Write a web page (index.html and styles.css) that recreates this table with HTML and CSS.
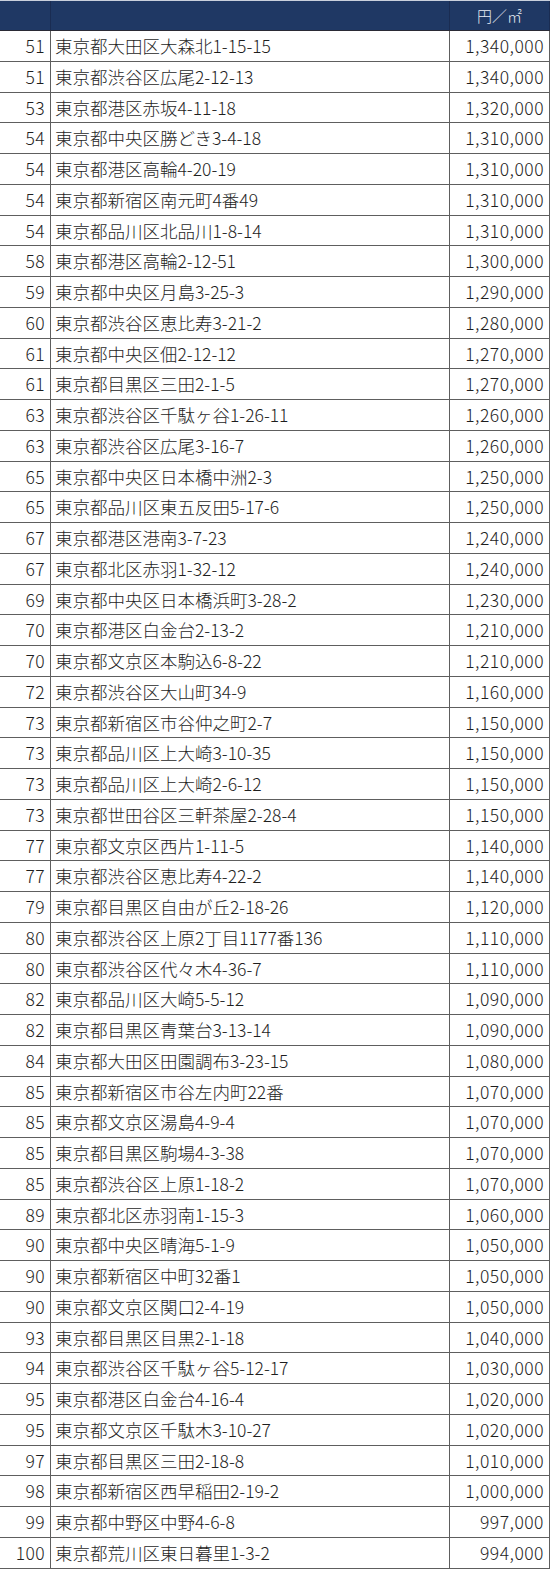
FILE: index.html
```html
<!DOCTYPE html>
<html lang="ja">
<head>
<meta charset="utf-8">
<link rel="stylesheet" href="styles.css">
</head>
<body>
<div class="tbl">
  <div class="row head"><div class="c rank"></div><div class="c addr"></div><div class="c price">円／㎡</div></div>
  <div class="row"><div class="c rank">51</div><div class="c addr">東京都大田区大森北1-15-15</div><div class="c price">1,340,000</div></div>
  <div class="row"><div class="c rank">51</div><div class="c addr">東京都渋谷区広尾2-12-13</div><div class="c price">1,340,000</div></div>
  <div class="row"><div class="c rank">53</div><div class="c addr">東京都港区赤坂4-11-18</div><div class="c price">1,320,000</div></div>
  <div class="row"><div class="c rank">54</div><div class="c addr">東京都中央区勝どき3-4-18</div><div class="c price">1,310,000</div></div>
  <div class="row"><div class="c rank">54</div><div class="c addr">東京都港区高輪4-20-19</div><div class="c price">1,310,000</div></div>
  <div class="row"><div class="c rank">54</div><div class="c addr">東京都新宿区南元町4番49</div><div class="c price">1,310,000</div></div>
  <div class="row"><div class="c rank">54</div><div class="c addr">東京都品川区北品川1-8-14</div><div class="c price">1,310,000</div></div>
  <div class="row"><div class="c rank">58</div><div class="c addr">東京都港区高輪2-12-51</div><div class="c price">1,300,000</div></div>
  <div class="row"><div class="c rank">59</div><div class="c addr">東京都中央区月島3-25-3</div><div class="c price">1,290,000</div></div>
  <div class="row"><div class="c rank">60</div><div class="c addr">東京都渋谷区恵比寿3-21-2</div><div class="c price">1,280,000</div></div>
  <div class="row"><div class="c rank">61</div><div class="c addr">東京都中央区佃2-12-12</div><div class="c price">1,270,000</div></div>
  <div class="row"><div class="c rank">61</div><div class="c addr">東京都目黒区三田2-1-5</div><div class="c price">1,270,000</div></div>
  <div class="row"><div class="c rank">63</div><div class="c addr">東京都渋谷区千駄ヶ谷1-26-11</div><div class="c price">1,260,000</div></div>
  <div class="row"><div class="c rank">63</div><div class="c addr">東京都渋谷区広尾3-16-7</div><div class="c price">1,260,000</div></div>
  <div class="row"><div class="c rank">65</div><div class="c addr">東京都中央区日本橋中洲2-3</div><div class="c price">1,250,000</div></div>
  <div class="row"><div class="c rank">65</div><div class="c addr">東京都品川区東五反田5-17-6</div><div class="c price">1,250,000</div></div>
  <div class="row"><div class="c rank">67</div><div class="c addr">東京都港区港南3-7-23</div><div class="c price">1,240,000</div></div>
  <div class="row"><div class="c rank">67</div><div class="c addr">東京都北区赤羽1-32-12</div><div class="c price">1,240,000</div></div>
  <div class="row"><div class="c rank">69</div><div class="c addr">東京都中央区日本橋浜町3-28-2</div><div class="c price">1,230,000</div></div>
  <div class="row"><div class="c rank">70</div><div class="c addr">東京都港区白金台2-13-2</div><div class="c price">1,210,000</div></div>
  <div class="row"><div class="c rank">70</div><div class="c addr">東京都文京区本駒込6-8-22</div><div class="c price">1,210,000</div></div>
  <div class="row"><div class="c rank">72</div><div class="c addr">東京都渋谷区大山町34-9</div><div class="c price">1,160,000</div></div>
  <div class="row"><div class="c rank">73</div><div class="c addr">東京都新宿区市谷仲之町2-7</div><div class="c price">1,150,000</div></div>
  <div class="row"><div class="c rank">73</div><div class="c addr">東京都品川区上大崎3-10-35</div><div class="c price">1,150,000</div></div>
  <div class="row"><div class="c rank">73</div><div class="c addr">東京都品川区上大崎2-6-12</div><div class="c price">1,150,000</div></div>
  <div class="row"><div class="c rank">73</div><div class="c addr">東京都世田谷区三軒茶屋2-28-4</div><div class="c price">1,150,000</div></div>
  <div class="row"><div class="c rank">77</div><div class="c addr">東京都文京区西片1-11-5</div><div class="c price">1,140,000</div></div>
  <div class="row"><div class="c rank">77</div><div class="c addr">東京都渋谷区恵比寿4-22-2</div><div class="c price">1,140,000</div></div>
  <div class="row"><div class="c rank">79</div><div class="c addr">東京都目黒区自由が丘2-18-26</div><div class="c price">1,120,000</div></div>
  <div class="row"><div class="c rank">80</div><div class="c addr">東京都渋谷区上原2丁目1177番136</div><div class="c price">1,110,000</div></div>
  <div class="row"><div class="c rank">80</div><div class="c addr">東京都渋谷区代々木4-36-7</div><div class="c price">1,110,000</div></div>
  <div class="row"><div class="c rank">82</div><div class="c addr">東京都品川区大崎5-5-12</div><div class="c price">1,090,000</div></div>
  <div class="row"><div class="c rank">82</div><div class="c addr">東京都目黒区青葉台3-13-14</div><div class="c price">1,090,000</div></div>
  <div class="row"><div class="c rank">84</div><div class="c addr">東京都大田区田園調布3-23-15</div><div class="c price">1,080,000</div></div>
  <div class="row"><div class="c rank">85</div><div class="c addr">東京都新宿区市谷左内町22番</div><div class="c price">1,070,000</div></div>
  <div class="row"><div class="c rank">85</div><div class="c addr">東京都文京区湯島4-9-4</div><div class="c price">1,070,000</div></div>
  <div class="row"><div class="c rank">85</div><div class="c addr">東京都目黒区駒場4-3-38</div><div class="c price">1,070,000</div></div>
  <div class="row"><div class="c rank">85</div><div class="c addr">東京都渋谷区上原1-18-2</div><div class="c price">1,070,000</div></div>
  <div class="row"><div class="c rank">89</div><div class="c addr">東京都北区赤羽南1-15-3</div><div class="c price">1,060,000</div></div>
  <div class="row"><div class="c rank">90</div><div class="c addr">東京都中央区晴海5-1-9</div><div class="c price">1,050,000</div></div>
  <div class="row"><div class="c rank">90</div><div class="c addr">東京都新宿区中町32番1</div><div class="c price">1,050,000</div></div>
  <div class="row"><div class="c rank">90</div><div class="c addr">東京都文京区関口2-4-19</div><div class="c price">1,050,000</div></div>
  <div class="row"><div class="c rank">93</div><div class="c addr">東京都目黒区目黒2-1-18</div><div class="c price">1,040,000</div></div>
  <div class="row"><div class="c rank">94</div><div class="c addr">東京都渋谷区千駄ヶ谷5-12-17</div><div class="c price">1,030,000</div></div>
  <div class="row"><div class="c rank">95</div><div class="c addr">東京都港区白金台4-16-4</div><div class="c price">1,020,000</div></div>
  <div class="row"><div class="c rank">95</div><div class="c addr">東京都文京区千駄木3-10-27</div><div class="c price">1,020,000</div></div>
  <div class="row"><div class="c rank">97</div><div class="c addr">東京都目黒区三田2-18-8</div><div class="c price">1,010,000</div></div>
  <div class="row"><div class="c rank">98</div><div class="c addr">東京都新宿区西早稲田2-19-2</div><div class="c price">1,000,000</div></div>
  <div class="row"><div class="c rank">99</div><div class="c addr">東京都中野区中野4-6-8</div><div class="c price">997,000</div></div>
  <div class="row"><div class="c rank">100</div><div class="c addr">東京都荒川区東日暮里1-3-2</div><div class="c price">994,000</div></div>
</div>
</body>
</html>
```
FILE: styles.css
```css
html, body {
  margin: 0;
  padding: 0;
  background: #ffffff;
}
.tbl {
  width: 550px;
  font-family: "Noto Sans CJK JP", "Noto Sans", sans-serif;
  font-size: 17.5px;
  font-weight: 300;
  color: #1e1e1e;
}
.row {
  display: grid;
  grid-template-columns: 51px 399px 100px;
  height: 30.76px;
  box-sizing: border-box;
  border-bottom: 1px solid #5e5e5e;
}
.row.head {
  height: 31px;
  background: #1f3864;
  border-top: 1px solid #c9d0dc;
  border-bottom: 1px solid #2a2a35;
  color: #e9edf5;
  font-size: 15px;
}
.c {
  display: flex;
  align-items: center;
  box-sizing: border-box;
  border-right: 1px solid #5e5e5e;
  white-space: nowrap;
  line-height: 1;
}
.head .c {
  border-right-color: #1a2c52;
}
.rank {
  justify-content: flex-end;
  padding-right: 5px;
  letter-spacing: 0.4px;
}
.addr {
  padding-left: 4px;
}
.price {
  justify-content: flex-end;
  padding-right: 5px;
  letter-spacing: 0.5px;
}
.head .price {
  justify-content: center;
  padding-right: 0;
  letter-spacing: 0;
}
```
